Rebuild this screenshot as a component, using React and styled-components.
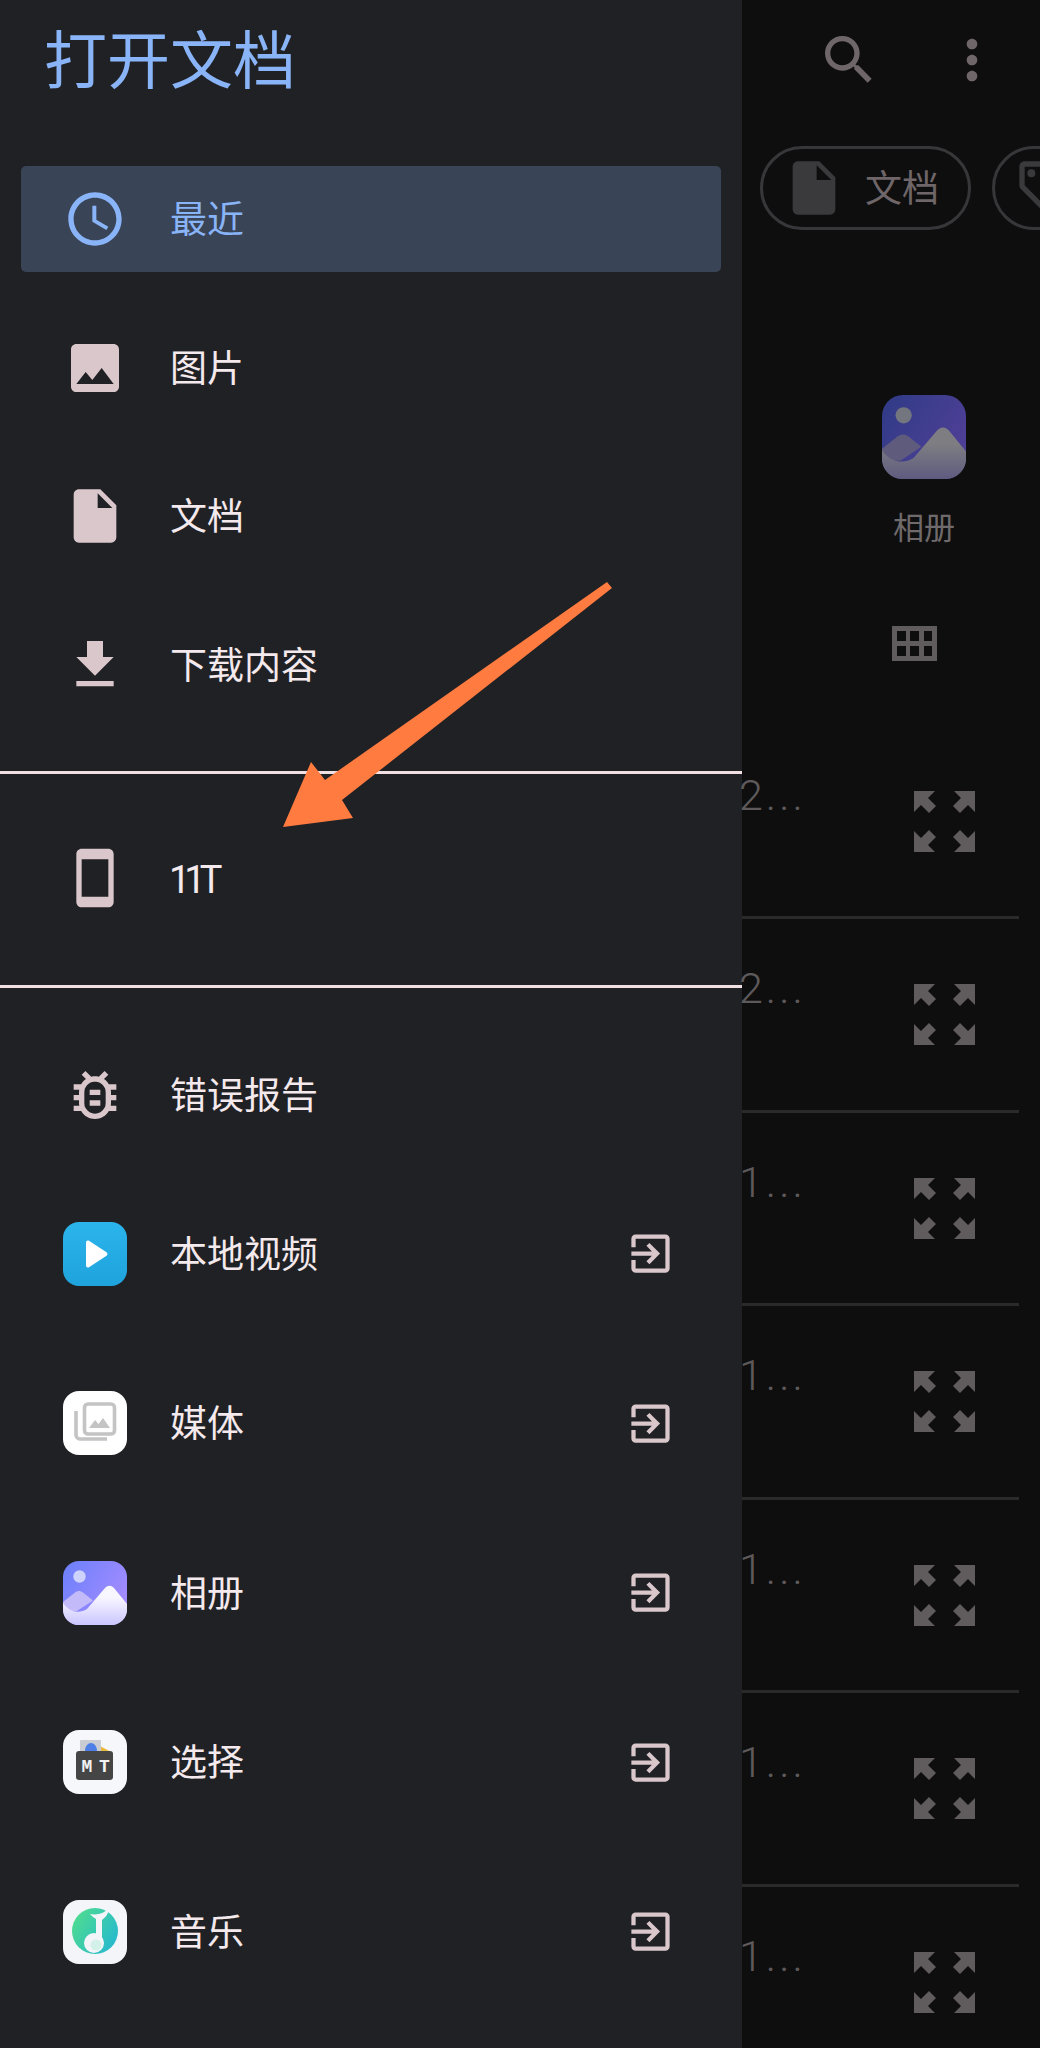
import React from "react";
import styled, { createGlobalStyle } from "styled-components";

const Global = createGlobalStyle`
  html, body { margin: 0; padding: 0; background: #0e0e0f; }
  * { box-sizing: border-box; }
`;
const CJK = `"Noto Sans CJK SC", "Noto Sans", Roboto, sans-serif`;

const Screen = styled.div`
  position: relative;
  display: flex;
  width: 1040px;
  height: 2048px;
  overflow: hidden;
  font-family: ${CJK};
`;
const Drawer = styled.aside`
  flex: 0 0 742px;
  display: flex;
  flex-direction: column;
  background: #202125;
  color: #f4e9ec;
`;
const Title = styled.h1`
  margin: 0;
  height: 145px;
  padding: 20px 0 0 44px;
  font-size: 63px;
  line-height: 72px;
  font-weight: 400;
  color: #8ab4f8;
`;
const Row = styled.div`
  display: flex;
  align-items: center;
  height: ${(p) => p.$h}px;
  padding: 0 21px;
  flex: none;
`;
const RowBody = styled.div`
  display: flex;
  align-items: center;
  flex: 1;
  height: 106px;
  border-radius: 5px;
  background: ${(p) => (p.$active ? "#394457" : "transparent")};
  color: ${(p) => (p.$active ? "#8ab4f8" : "#f4e9ec")};
`;
const IconSlot = styled.span`
  flex: 0 0 64px;
  display: flex;
  justify-content: center;
  align-items: center;
  margin: 0 43px 0 42px;
  color: ${(p) => (p.$active ? "#8ab4f8" : "#d9c7cb")};
`;
const Label = styled.span`
  flex: 1;
  font-size: 37px;
  line-height: 50px;
  padding-bottom: 4px;
  white-space: nowrap;
`;
const LatinLabel = styled(Label)`
  font-family: Roboto, sans-serif;
  font-size: 38px;
  letter-spacing: -6px;
  margin-left: -1px;
  padding: 4px 0 0;
`;
const ExitSlot = styled.span`
  display: flex;
  margin-right: 45px;
  color: #d9c7cb;
`;
const Divider = styled.hr`
  flex: none;
  height: 3px;
  border: 0;
  margin: ${(p) => p.$top}px 0 ${(p) => p.$bottom}px;
  background: #f0dfe3;
`;
const Panel = styled.main`
  flex: 1;
  min-width: 0;
  display: flex;
  flex-direction: column;
  background: #0e0e0f;
  color: #6e6668;
`;
const Toolbar = styled.div`
  flex: none;
  height: 120px;
  display: flex;
  align-items: center;
  justify-content: flex-end;
  gap: 59px;
  padding-right: 36px;
`;
const Chips = styled.div`
  flex: none;
  display: flex;
  gap: 21px;
  margin-top: 26px;
  padding-left: 18px;
  width: 298px;
  overflow: hidden;
`;
const Chip = styled.div`
  flex: 0 0 ${(p) => p.$w}px;
  height: 84px;
  display: flex;
  align-items: center;
  gap: 19px;
  padding-left: 19px;
  border: 3px solid #37373a;
  border-radius: 42px;
  color: #3a3a3c;
  font-size: 37px;
`;
const ChipText = styled.span`
  color: #6e6668;
  line-height: 50px;
  padding-bottom: 4px;
`;
const Shortcuts = styled.div`
  flex: none;
  display: flex;
  justify-content: flex-end;
  margin-top: 165px;
  padding-right: 74px;
`;
const Shortcut = styled.div`
  width: 84px;
  display: flex;
  flex-direction: column;
  align-items: center;
  gap: 27px;
`;
const ShortcutLabel = styled.span`
  font-size: 31px;
  line-height: 40px;
  white-space: nowrap;
  color: #6f6a6b;
`;
const ViewBar = styled.div`
  flex: none;
  display: flex;
  justify-content: flex-end;
  margin-top: 80px;
  padding-right: 103px;
  color: #605b5c;
`;
const List = styled.div`
  flex: none;
  margin: 64.5px 21px 0 0;
`;
const ListRow = styled.div`
  height: 193.5px;
  display: flex;
  justify-content: space-between;
  align-items: flex-start;
  padding: 44px 44px 0 0;
  border-bottom: 3px solid #2a2a2b;
`;
const RowText = styled.span`
  margin-left: -3px;
  font-family: Roboto, sans-serif;
  font-weight: 300;
  font-size: 43px;
  line-height: 50px;
  letter-spacing: 3px;
  color: #5e5a5b;
`;
const RowAction = styled.span`
  display: flex;
  margin-top: 21px;
  color: #605b5c;
`;
const ArrowLayer = styled.svg`
  position: absolute;
  left: 0;
  top: 0;
  pointer-events: none;
`;

const M = ({ d, size = 64, children }) => (
  <svg width={size} height={size} viewBox="0 0 24 24" fill="currentColor">
    {d && <path d={d} />}
    {children}
  </svg>
);

const P = {
  clock: "M11.99 2C6.47 2 2 6.48 2 12s4.47 10 9.99 10C17.52 22 22 17.52 22 12S17.52 2 11.99 2zM12 20c-4.42 0-8-3.58-8-8s3.58-8 8-8 8 3.58 8 8-3.58 8-8 8zM12.5 7H11v6l5.25 3.15.75-1.23-4.5-2.67z",
  image: "M21 19V5c0-1.1-.9-2-2-2H5c-1.1 0-2 .9-2 2v14c0 1.1.9 2 2 2h14c1.1 0 2-.9 2-2zM8.5 13.5l2.5 3.01L14.5 12l4.5 6H5l3.5-4.5z",
  doc: "M14 2H6c-1.1 0-2 .9-2 2v16c0 1.1.9 2 2 2h12c1.1 0 2-.9 2-2V8l-6-6zm-1 7V3.5L18.5 9H13z",
  download: "M19 9h-4V3H9v6H5l7 7 7-7zM5 18v2h14v-2H5z",
  phone: "M17 1.01L7 1c-1.1 0-2 .9-2 2v18c0 1.1.9 2 2 2h10c1.1 0 2-.9 2-2V3c0-1.1-.9-1.99-2-1.99zM17 19H7V5h10v14z",
  bug: "M20 8h-2.81c-.45-.78-1.07-1.45-1.82-1.96L17 4.41 15.59 3l-2.17 2.17C12.96 5.06 12.49 5 12 5c-.49 0-.96.06-1.41.17L8.41 3 7 4.41l1.62 1.63C7.88 6.55 7.26 7.22 6.81 8H4v2h2.09c-.05.33-.09.66-.09 1v1H4v2h2v1c0 .34.04.67.09 1H4v2h2.81c1.04 1.79 2.97 3 5.19 3s4.15-1.21 5.19-3H20v-2h-2.09c.05-.33.09-.66.09-1v-1h2v-2h-2v-1c0-.34-.04-.67-.09-1H20V8zm-4 4v3c0 .22-.03.47-.07.7l-.1.65-.37.65c-.72 1.24-2.04 2-3.46 2s-2.74-.77-3.46-2l-.37-.64-.1-.65C8.03 15.48 8 15.23 8 15v-4c0-.23.03-.48.07-.7l.1-.65.37-.65c.3-.52.72-.97 1.21-1.31l.57-.39.74-.18c.31-.08.63-.12.94-.12.32 0 .63.04.95.12l.68.16.61.42c.5.34.91.78 1.21 1.31l.38.65.1.65c.04.22.07.47.07.69v1zm-6 2h4v2h-4zm0-4h4v2h-4z",
  exit: "M10.09 15.59L11.5 17l5-5-5-5-1.41 1.41L12.67 11H3v2h9.67l-2.58 2.59zM19 3H5c-1.11 0-2 .9-2 2v4h2V5h14v14H5v-4H3v4c0 1.1.89 2 2 2h14c1.1 0 2-.9 2-2V5c0-1.1-.9-2-2-2z",
  search: "M15.5 14h-.79l-.28-.27C15.41 12.59 16 11.11 16 9.5 16 5.91 13.09 3 9.5 3S3 5.91 3 9.5 5.91 16 9.5 16c1.61 0 3.09-.59 4.23-1.57l.27.28v.79l5 4.99L20.49 19l-4.99-5zm-6 0C7.01 14 5 11.99 5 9.5S7.01 5 9.5 5 14 7.01 14 9.5 11.99 14 9.5 14z",
  more: "M12 8c1.1 0 2-.9 2-2s-.9-2-2-2-2 .9-2 2 .9 2 2 2zm0 2c-1.1 0-2 .9-2 2s.9 2 2 2 2-.9 2-2-.9-2-2-2zm0 6c-1.1 0-2 .9-2 2s.9 2 2 2 2-.9 2-2-.9-2-2-2z",
  tag: "M21.41 11.58l-9-9C12.05 2.22 11.55 2 11 2H4c-1.1 0-2 .9-2 2v7c0 .55.22 1.05.59 1.42l9 9c.36.36.86.58 1.41.58s1.05-.22 1.41-.59l7-7c.37-.36.59-.86.59-1.41s-.23-1.06-.59-1.42zM13 20.01L4 11V4h7v-.01l9 8.99-7 7.02z",
};

const Squircle = ({ fill }) => <rect width="64" height="64" rx="16" fill={fill} />;

const VideoIcon = () => (
  <svg width="64" height="64" viewBox="0 0 64 64">
    <defs>
      <linearGradient id="vid" x1="0" y1="0" x2="0" y2="1">
        <stop offset="0" stopColor="#2bb4ec" />
        <stop offset="1" stopColor="#1fa3dc" />
      </linearGradient>
    </defs>
    <Squircle fill="url(#vid)" />
    <path d="M23 20.500c0-1.600 1.600-2.500 3-1.700l17.500 11.500c1.200.8 1.200 2.600 0 3.400L26 45.200c-1.400.8-3 0-3-1.700z" fill="#fff" />
  </svg>
);
const MediaIcon = () => (
  <svg width="64" height="64" viewBox="0 0 64 64">
    <Squircle fill="#fff" />
    <g fill="none" stroke="#c4c4c4" strokeWidth="3.6">
      <rect x="21.500" y="13" width="30" height="30" rx="3.500" />
      <path d="M13 20v24a4 4 0 0 0 4 4h27" />
    </g>
    <path d="M26 37l6-8 3.500 4 4.500-6 7 10z" fill="#c4c4c4" />
  </svg>
);
const AlbumIcon = ({ size = 64, dim }) => (
  <svg width={size} height={size} viewBox="0 0 64 64">
    <defs>
      <linearGradient id={dim ? "alD" : "alB"} x1="0" y1="0" x2="1" y2="0.6">
        <stop offset="0" stopColor={dim ? "#2f3b86" : "#6a80fb"} />
        <stop offset="1" stopColor={dim ? "#4f3f96" : "#a58cff"} />
      </linearGradient>
      <linearGradient id={dim ? "mtD" : "mtB"} x1="0" y1="0" x2="0" y2="1">
        <stop offset="0.3" stopColor={dim ? "#7e7e82" : "#f8f6ff"} />
        <stop offset="1" stopColor={dim ? "#5f5b80" : "#cac6ff"} />
      </linearGradient>
    </defs>
    <Squircle fill={`url(#${dim ? "alD" : "alB"})`} />
    <circle cx="16.500" cy="15.500" r="6.200" fill={dim ? "#74767f" : "#cdd3fb"} />
    <path d="M0 41l12-9.500c3-2 5-2 8 0l10 8L14 50H0z" fill={dim ? "#5f5b7d" : "#c3baf9"} />
    <path d="M0 42c6 9 16 11 24 6L42 27c3-3 6-3 9 0l13 16v6c0 8-7 15-15 15H15C7 64 0 57 0 49z" fill={`url(#${dim ? "mtD" : "mtB"})`} />
  </svg>
);
const MtIcon = () => (
  <svg width="64" height="64" viewBox="0 0 64 64">
    <Squircle fill="#f6f7fa" />
    <path d="M37 16l13 7v8H37z" fill="#e8b93c" />
    <rect x="17" y="10" width="21" height="20" rx="1" fill="#c9ccd2" />
    <path d="M22 21c0-5 3-8 6-8s6 3 6 8z" fill="#4d7fe6" />
    <rect x="13" y="21" width="37" height="29" rx="3" fill="#454545" />
    <text x="18.500" y="42" fontFamily="'Liberation Mono', monospace" fontWeight="700" fontSize="18" fill="#f2f2f2">M</text>
    <text x="36" y="42" fontFamily="'Liberation Mono', monospace" fontWeight="700" fontSize="18" fill="#f2f2f2">T</text>
  </svg>
);
const MusicIcon = () => (
  <svg width="64" height="64" viewBox="0 0 64 64">
    <defs>
      <linearGradient id="mus" x1="0" y1="0.2" x2="1" y2="0.8">
        <stop offset="0" stopColor="#4fdc8f" />
        <stop offset="1" stopColor="#25b8d0" />
      </linearGradient>
    </defs>
    <Squircle fill="#f3f5f8" />
    <circle cx="32" cy="31" r="23" fill="url(#mus)" />
    <path d="M27 14c5 1 11 0 14-2 2-1 4-3 5-5 0 6-3 10-7 13v23h-6V19c-2-1-4-3-6-5z" fill="#f3f5f8" />
    <circle cx="31" cy="43" r="10" fill="#f3f5f8" />
    <circle cx="33" cy="45" r="5.500" fill="#d4f1e9" />
  </svg>
);

const GridIcon = () => (
  <svg width="45" height="35" viewBox="0 0 45 35" fill="currentColor" fillRule="evenodd">
    <path d="M0 0h45v35H0zM5 5v10h9V5zm13 0v10h9V5zm14 0v10h8V5zM5 20v10h9V20zm13 0v10h9V20zm14 0v10h8V20z" />
  </svg>
);
const ExpandIcon = () => (
  <svg width="61" height="61" viewBox="0 0 61 61" fill="currentColor">
    {[0, 1, 2, 3].map((i) => (
      <path
        key={i}
        d="M0 0h21l-7 7 8 8-7 7-8-8-7 7z"
        transform={`translate(${i % 2 ? 61 : 0} ${i > 1 ? 61 : 0}) scale(${i % 2 ? -1 : 1} ${i > 1 ? -1 : 1})`}
      />
    ))}
  </svg>
);

const top = [
  { icon: P.image, label: "图片" },
  { icon: P.doc, label: "文档" },
  { icon: P.download, label: "下载内容" },
];
const apps = [
  { icon: <VideoIcon />, label: "本地视频" },
  { icon: <MediaIcon />, label: "媒体" },
  { icon: <AlbumIcon />, label: "相册" },
  { icon: <MtIcon />, label: "选择" },
  { icon: <MusicIcon />, label: "音乐" },
];
const rows = ["2...", "2...", "1...", "1...", "1...", "1...", "1..."];

export default function App() {
  return (
    <Screen>
      <Global />
      <Drawer>
        <Title>打开文档</Title>
        <Row $h={148.5}>
          <RowBody $active>
            <IconSlot $active><M d={P.clock} size={64} /></IconSlot>
            <Label>最近</Label>
          </RowBody>
        </Row>
        {top.map((t) => (
          <Row $h={148.5} key={t.label}>
            <RowBody>
              <IconSlot><M d={t.icon} /></IconSlot>
              <Label>{t.label}</Label>
            </RowBody>
          </Row>
        ))}
        <Divider $top={32} $bottom={0} />
        <Row $h={208}>
          <RowBody>
            <IconSlot><M d={P.phone} /></IconSlot>
            <LatinLabel>11T</LatinLabel>
          </RowBody>
        </Row>
        <Divider $top={3} $bottom={32} />
        <Row $h={149}>
          <RowBody>
            <IconSlot><M d={P.bug} /></IconSlot>
            <Label>错误报告</Label>
          </RowBody>
        </Row>
        {apps.map((a) => (
          <Row $h={169.5} key={a.label}>
            <RowBody>
              <IconSlot>{a.icon}</IconSlot>
              <Label>{a.label}</Label>
              <ExitSlot><M d={P.exit} size={51} /></ExitSlot>
            </RowBody>
          </Row>
        ))}
      </Drawer>
      <Panel>
        <Toolbar>
          <M d={P.search} />
          <M d={P.more} />
        </Toolbar>
        <Chips>
          <Chip $w={211}>
            <M d={P.doc} />
            <ChipText>文档</ChipText>
          </Chip>
          <Chip $w={200}>
            <M d={P.tag}>
              <circle cx="6.500" cy="6.500" r="1.500" />
            </M>
          </Chip>
        </Chips>
        <Shortcuts>
          <Shortcut>
            <AlbumIcon size={84} dim />
            <ShortcutLabel>相册</ShortcutLabel>
          </Shortcut>
        </Shortcuts>
        <ViewBar><GridIcon /></ViewBar>
        <List>
          {rows.map((r, i) => (
            <ListRow key={i}>
              <RowText>{r}</RowText>
              <RowAction><ExpandIcon /></RowAction>
            </ListRow>
          ))}
        </List>
      </Panel>
      <ArrowLayer width="1040" height="2048" viewBox="0 0 1040 2048">
        <path d="M607 582L612 588L342 800L353 818L283 827L311 762L325 780Z" fill="#ff7b40" />
      </ArrowLayer>
    </Screen>
  );
}
